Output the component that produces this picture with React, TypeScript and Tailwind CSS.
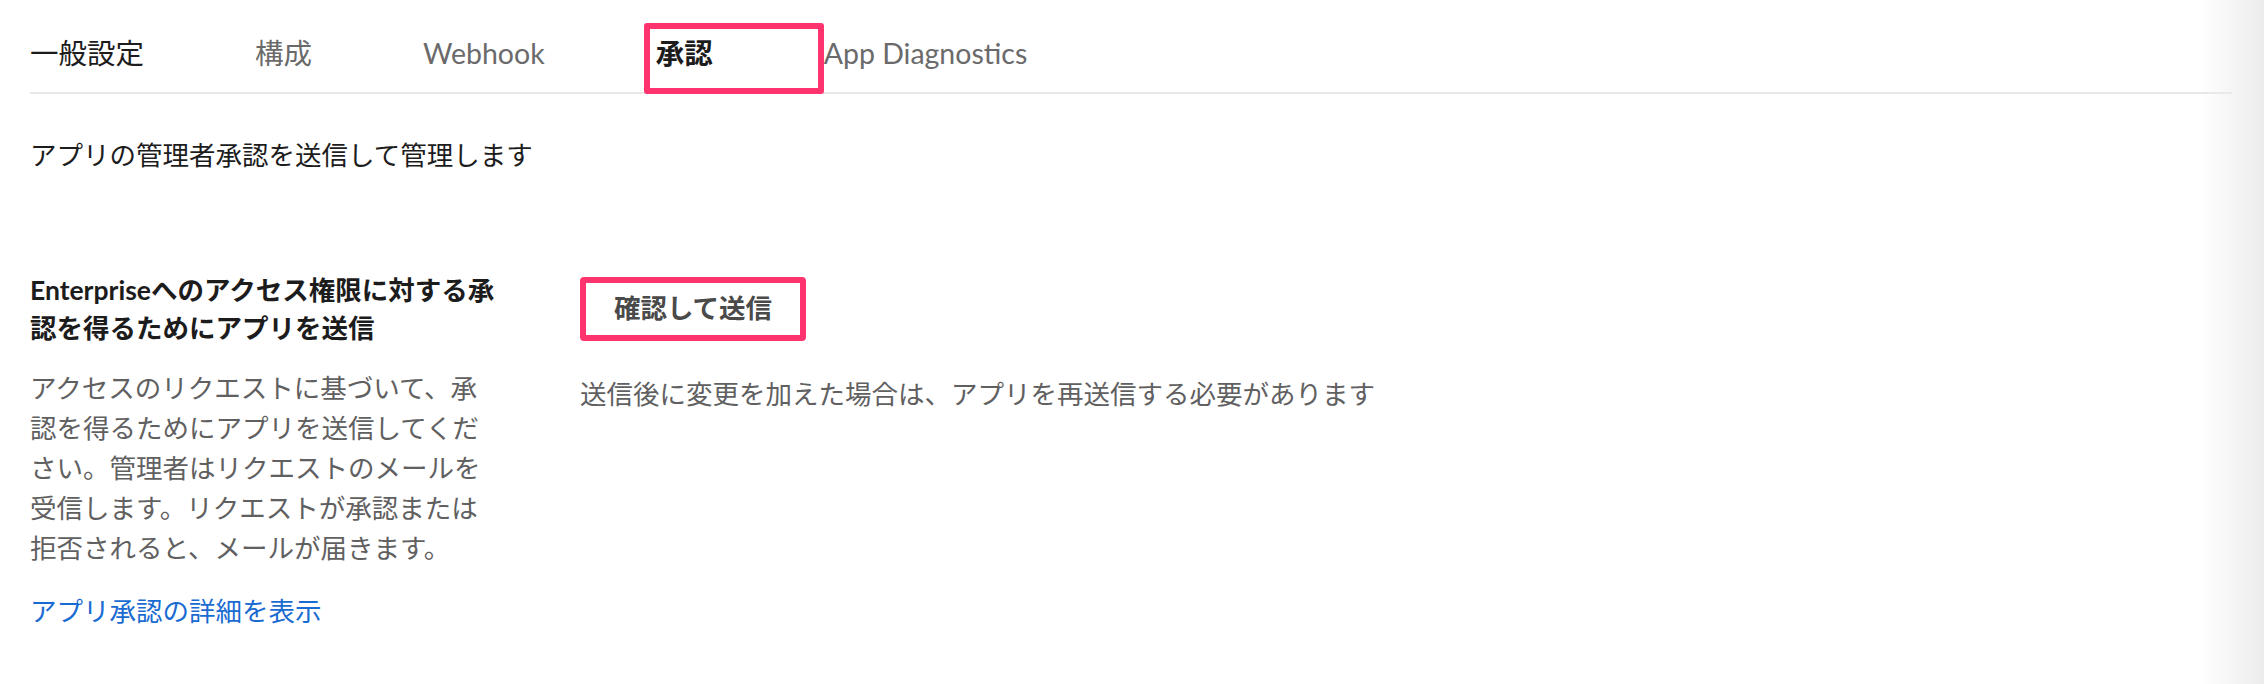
const tabs = [
  { label: "一般設定", tone: "text-[#1d1c1d]" },
  { label: "構成", tone: "text-[#6b6a6b]" },
  { label: "Webhook", tone: "text-[#6b6a6b]" },
  { label: "承認", tone: "text-[#1d1c1d] font-bold", active: true },
  { label: "App Diagnostics", tone: "text-[#6b6a6b]" },
];

const App = () => {
  return (
    <div className="relative min-h-[684px] w-full overflow-hidden bg-white font-['Lato','Noto_Sans_CJK_JP',sans-serif]">
      <div className="pl-[30px] pr-[32px]">
        {/* Tab bar */}
        <div className="flex gap-[111px] border-b-2 border-[#e8e8e8] pt-[33px] pb-[19px]">
          {tabs.map((t) => (
            <div key={t.label} className={`relative text-[28.5px] leading-[40px] ${t.tone}`}>
              {t.label}
              {t.active && (
                <div className="absolute left-[-12px] top-[-10px] h-[71px] w-[180px] rounded-[3px] border-[6px] border-[#ff336e]" />
              )}
            </div>
          ))}
        </div>

        <p className="mt-[41px] text-[26.5px] leading-[40px] text-[#1d1c1d]">
          アプリの管理者承認を送信して管理します
        </p>

        {/* Approval section */}
        <div className="mt-[96px] flex gap-[80px]">
          <div className="w-[470px] shrink-0">
            <h2 className="text-[26.5px] font-bold leading-[38px] text-[#1d1c1d]">
              Enterpriseへのアクセス権限に対する承認を得るためにアプリを送信
            </h2>
            <p className="mt-[21px] text-[26.5px] leading-[40px] text-[#616061]">
              アクセスのリクエストに基づいて、承認を得るためにアプリを送信してください。管理者はリクエストのメールを受信します。リクエストが承認または拒否されると、メールが届きます。
            </p>
            <a href="#" className="mt-[23px] block text-[26.5px] leading-[40px] text-[#1a6bd1]">
              アプリ承認の詳細を表示
            </a>
          </div>

          <div className="pt-[6px]">
            <button className="h-[64px] w-[226px] rounded-[4px] border-[6px] border-[#ff336e] bg-white text-[26.5px] font-bold text-[#4a4a4a]">
              確認して送信
            </button>
            <p className="mt-[33px] text-[26.5px] leading-[40px] text-[#616061]">
              送信後に変更を加えた場合は、アプリを再送信する必要があります
            </p>
          </div>
        </div>
      </div>

      {/* right edge shadow */}
      <div className="pointer-events-none absolute inset-y-0 right-0 w-[64px] bg-gradient-to-r from-white/0 to-[#ececec]" />
    </div>
  );
};

export default App;
